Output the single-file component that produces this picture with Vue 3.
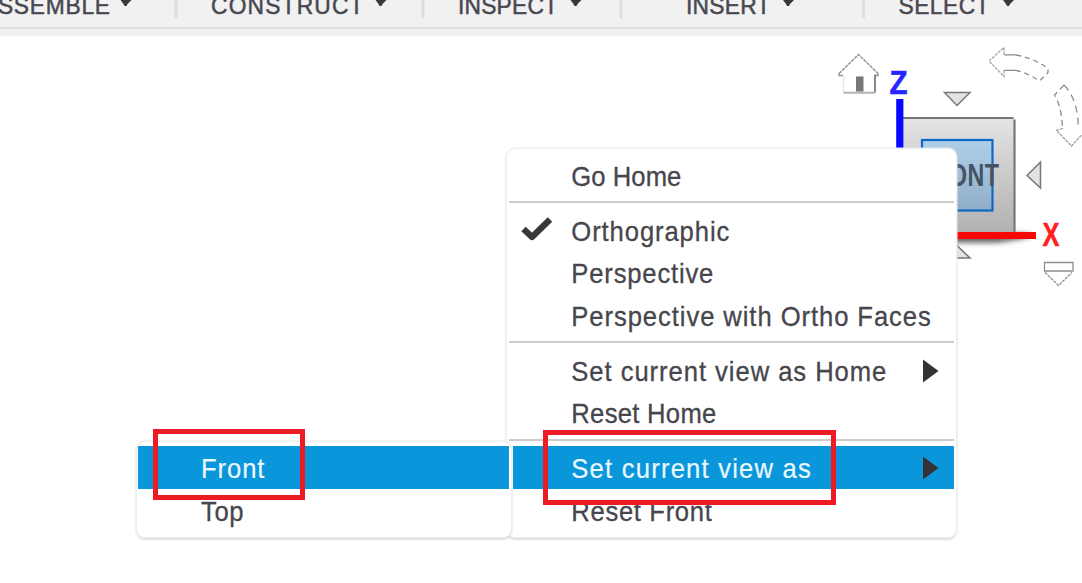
<script setup>
const tools = [
  { label: 'ASSEMBLE', x: -18, w: 128, arrow: 126 },
  { label: 'CONSTRUCT', x: 211, w: 152.5, arrow: 381 },
  { label: 'INSPECT', x: 458, w: 100, arrow: 576 },
  { label: 'INSERT', x: 686, w: 84.5, arrow: 788.5 },
  { label: 'SELECT', x: 898.5, w: 91, arrow: 1008.5 },
]
const dividers = [176, 423, 621, 863.5]
const squeeze = 0.95
const groups = [
  [{ label: 'Go Home', w: 110 }],
  [
    { label: 'Orthographic', w: 158, checked: true },
    { label: 'Perspective', w: 142 },
    { label: 'Perspective with Ortho Faces', w: 359.5 },
  ],
  [
    { label: 'Set current view as Home', w: 315, sub: true },
    { label: 'Reset Home', w: 145 },
  ],
  [
    { label: 'Set current view as', w: 239.5, sub: true, active: true },
    { label: 'Reset Front', w: 140.5 },
  ],
]
const faces = [
  { label: 'Front', w: 63.5, active: true },
  { label: 'Top', w: 42.5 },
]
</script>

<template>
  <main class="app">
    <header class="toolbar">
      <svg width="1082" height="36">
        <rect y="27" width="1082" height="2" fill="#dedede" />
        <rect v-for="d in dividers" :key="d" :x="d - 1.5" width="3" height="18" fill="#dedede" />
        <g v-for="t in tools" :key="t.label">
          <text class="tool" :x="t.x / squeeze" y="13.8" :transform="`scale(${squeeze} 1)`" :textLength="t.w / squeeze" lengthAdjust="spacing">{{ t.label }}</text>
          <path :d="`M${t.arrow - 5.5} 0h11l-4 4-1 2h-1h-1l-1-2z`" fill="#383838" />
        </g>
      </svg>
    </header>

    <svg class="viewcube" width="262" height="260" viewBox="820 40 262 260">
      <defs>
        <linearGradient id="face" x2="0" y2="1"><stop stop-color="#e4e4e4" /><stop offset="1" stop-color="#b0b0b0" /></linearGradient>
        <linearGradient id="pane" x2="0" y2="1"><stop stop-color="#afcfe9" /><stop offset="1" stop-color="#91aec8" /></linearGradient>
        <filter id="soft" x="-20%" y="-150%" width="140%" height="400%"><feGaussianBlur stdDeviation="4 2.5" /></filter>
      </defs>
      <path d="M839 73.500L858.500 54.500L878 73.500" fill="none" stroke="#999" stroke-width="1.600" stroke-dasharray="3.500 .8" />
      <path d="M839 73v2.500h4M878 73v2.500h-3" fill="none" stroke="#999" stroke-width="1.500" />
      <path d="M843.500 76v16" stroke="#e4e4e4" stroke-width="1.200" />
      <path d="M843.500 92.700h32" stroke="#b2b2b2" stroke-width="2" />
      <path d="M875 74.500v17.500" stroke="#888" stroke-width="2" />
      <rect x="856" y="76.500" width="7.500" height="15" fill="#777" />

      <path d="M910 233h118v5l-30 5h-88z" fill="#333" opacity=".72" filter="url(#soft)" />
      <rect x="902" y="118" width="112" height="116" fill="url(#face)" />
      <path d="M902 118h111.500M1014.500 119.500V232" fill="none" stroke="#777" stroke-width="2.200" />
      <rect x="922" y="140" width="70.500" height="70.500" fill="url(#pane)" stroke="#0c69c8" stroke-width="2.200" />
      <text class="front" x="1222.700" y="186.500" transform="scale(.75 1)" textLength="109.300" lengthAdjust="spacing">FRONT</text>
      <path d="M899.800 99v65" stroke="#0808ff" stroke-width="7.200" />
      <path d="M930 235.500h106" stroke="#f90606" stroke-width="7.200" />
      <text class="axis z" x="889.500" y="94" textLength="18" lengthAdjust="spacingAndGlyphs">Z</text>
      <text class="axis red" x="1042.500" y="246" textLength="17" lengthAdjust="spacingAndGlyphs">X</text>

      <g fill="#e2e2e2" stroke="#777" stroke-width="1.500">
        <path d="M944.500 92.500h25.500L957 105.500z" />
        <path d="M1040.500 162v26l-13.500-12.500z" />
        <path d="M944 258h26l-13-12.500z" />
      </g>
      <g fill="#fff" stroke="#8c8c8c" stroke-width="1.300">
        <path d="M1044.500 262.500h28.500v8.500h-28.500z" />
        <path d="M1045 272.500l13.500 13 13.500-13" stroke-dasharray="3 1" />
        <path d="M1004 54.500V47.500L989 61l15 15.500V70.500" stroke="#a5a5a5" stroke-dasharray="3 1" />
        <path d="M1004 54.800h12M1004 70.300h13" />
        <path d="M1016 55q18 3 32 13.500v4l-8.500 8.500q-12-8-23-10.500" stroke-dasharray="5 4" />
        <path d="M1064 85l-9.500 10q7 11 8 33" stroke-dasharray="6 4" />
        <path d="M1064 85q12 12 14 35v9" fill="none" stroke-dasharray="7 5" />
        <path d="M1063 128.500l-6.500 2 15 15.500L1082 134.500" stroke="#999" stroke-dasharray="3 1" />
      </g>
    </svg>

    <nav class="menu main">
      <div v-for="(group, g) in groups" :key="g" class="group">
        <div v-for="item in group" :key="item.label" class="row" :class="{ active: item.active }">
          <svg class="mark" width="64" height="42">
            <path v-if="item.checked" d="M14.500 20l8.500 8L41 10.500" fill="none" stroke="#383838" stroke-width="6.400" stroke-linejoin="round" />
          </svg>
          <svg class="caption" width="363" height="42">
            <text x="-.7" y="32" :transform="`scale(${squeeze} 1)`" :textLength="item.w / squeeze" lengthAdjust="spacing">{{ item.label }}</text>
          </svg>
          <svg v-if="item.sub" class="arrow" width="18" height="42"><path d="M0 10.500v23l15.500-11.500z" fill="#333" /></svg>
        </div>
      </div>
    </nav>

    <nav class="menu flyout">
      <div v-for="item in faces" :key="item.label" class="row" :class="{ active: item.active }">
        <svg class="mark" width="64" height="42" />
        <svg class="caption" width="200" height="42">
          <text x="0" y="32" :transform="`scale(${squeeze} 1)`" :textLength="item.w / squeeze" lengthAdjust="spacing">{{ item.label }}</text>
        </svg>
      </div>
    </nav>

    <div class="highlight front-box"></div>
    <div class="highlight view-box"></div>
  </main>
</template>

<style>
html, body { background: #fff; overflow: hidden; }
</style>

<style scoped>
.app { position: relative; width: 1082px; height: 583px; overflow: hidden; background: #fff; font-family: "Liberation Sans", Arial, sans-serif; }
.toolbar { height: 36px; background: #f1f1f1; }
svg { display: block; flex: none; }
.tool { font-size: 24px; fill: #484850; stroke: #484850; stroke-width: .5px; }
.viewcube { position: absolute; left: 820px; top: 40px; }
.front { font-size: 31px; font-weight: bold; fill: #445464; }
.axis { font-size: 34px; font-weight: bold; }
.z { fill: #2525ff; stroke: #2525ff; stroke-width: .6px; }
.red { fill: #ff2020; stroke: #ff2020; stroke-width: .5px; }
.menu { position: absolute; box-sizing: border-box; background: #fff; border-radius: 8px; }
.main { left: 507px; top: 149px; width: 449px; height: 388px; padding: 4.5px 2px 6px; box-shadow: 0 0 0 1.5px #eee, 0 2px 3px #bbb; }
.flyout { left: 137px; top: 442px; width: 374px; height: 95px; padding: 4px 2px 0 1px; box-shadow: 0 0 0 1.5px #ececec, 0 2px 3px #bbb; }
.group + .group::before { content: ""; display: block; height: 2px; margin: 5px 0 5.5px; background: #ccc; }
.row { display: flex; height: 42.5px; }
.main .mark { margin-right: -1px; }
.main .caption { margin-right: -12px; }
.caption { overflow: visible; }
.active { background: #0996da; }
.main .active { margin-left: 4px; }
.main .active .mark { margin-left: -4px; }
.flyout .mark { width: 63px; }
.caption text { font-size: 27px; fill: #46464c; stroke: #46464c; stroke-width: .3px; }
.active .caption text { fill: #eaf8ff; stroke: #eaf8ff; stroke-width: .2px; }
.highlight { position: absolute; box-sizing: border-box; border: 5px solid #ed1c24; }
.front-box { left: 153px; top: 429px; width: 152px; height: 71px; }
.view-box { left: 543px; top: 430px; width: 293px; height: 75px; }
</style>
